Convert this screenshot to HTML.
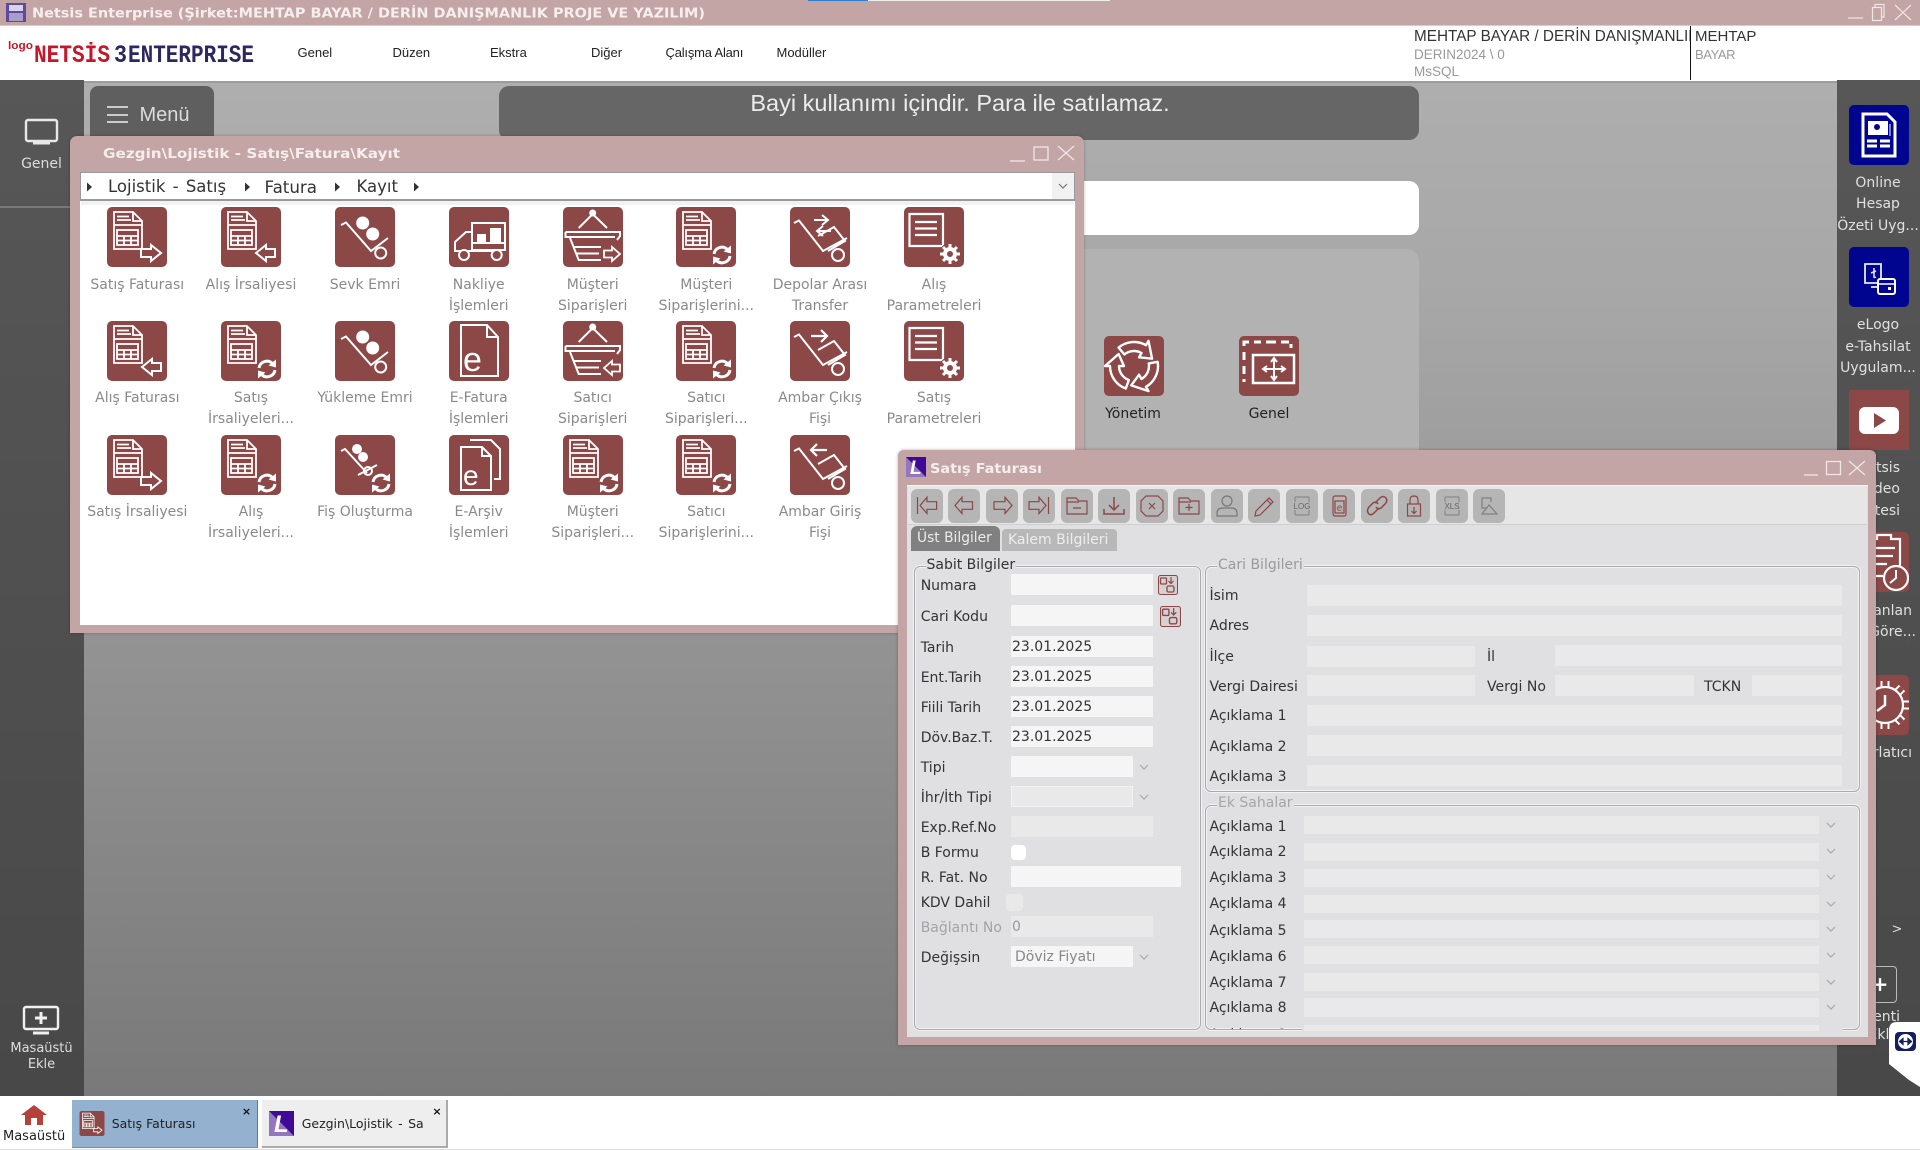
<!DOCTYPE html>
<html lang="tr"><head><meta charset="utf-8"><title>Netsis Enterprise</title>
<style>
*{box-sizing:border-box}
html,body{margin:0;padding:0;width:1920px;height:1150px;overflow:hidden;background:#8e8e8e}
body{position:relative;font-family:"DejaVu Sans",sans-serif;font-size:14px}
.a{position:absolute}
.t{position:absolute;white-space:nowrap;line-height:20px;height:20px;color:#333;font-size:14px;margin-top:1px}
.s{font-family:"Liberation Sans",sans-serif}
.c{text-align:center}
.cell{position:absolute;width:114px;text-align:center;color:#8a8a8a;font-size:14px;line-height:21px;white-space:nowrap}
.cell svg{display:block;margin:0 auto 7.4px;width:60px;height:60px}
.f{position:absolute;background:#f5f5f5}
.d{position:absolute;background:#e9e9e9}
.btn{position:absolute;top:489px;width:32px;height:34px;background:#b5b5b5;border-radius:6px}
.btn svg{display:block;width:32px;height:34px;fill:none;stroke:#8c4747;stroke-width:1.2}
.g{position:absolute;border:1px solid #a9a9ad;border-radius:6px;box-shadow:0 0 0 1px #f2f2f2,inset 0 0 0 1px #f2f2f2}
.lg{position:absolute;background:#e0dfe2;line-height:16px;height:16px;padding:0 1px;white-space:nowrap;font-size:14px}
.ch{position:absolute;width:10px;height:6px;fill:none;stroke:#a8a8a8;stroke-width:1.2}
.side{color:#e0e0e0;width:84px;left:1836px;text-align:center}
.sr{color:#e0e0e0;text-align:right;width:84px}
</style></head><body>
<svg width="0" height="0" style="position:absolute">
<defs>
<g id="doc" fill="none" stroke="#fff" stroke-width="1.8"><path d="M7 5H26L35 14V42H7Z M26 5V14H35 M10 9.5H22 M10 13H24 M7 18H35"/><rect x="10" y="23" width="21" height="15"/><path d="M17 29V38M24 29V38M10 29H31M10 33.5H31"/></g>
<path id="arrR" d="M34 42H44V38L54 46L44 54V50H34Z" fill="#8c4747" stroke="#fff" stroke-width="2"/>
<path id="arrL" d="M54 42H45V38L35 46L45 54V50H54Z" fill="#8c4747" stroke="#fff" stroke-width="2"/>
<g id="ref"><circle cx="46" cy="48" r="11.5" fill="#8c4747"/><path d="M38 47A8 8 0 0 1 51.500 42.500M54 49A8 8 0 0 1 40.500 53.500" fill="none" stroke="#fff" stroke-width="3"/><path d="M55 38.500L55 46.500L47.500 44.500ZM37 57.500L37 49.500L44.500 51.500Z" fill="#fff"/></g>
<g id="trol" fill="none" stroke="#fff" stroke-width="2"><path d="M6 18L11 15.500L36 44L53 31"/><circle cx="45.700" cy="46" r="5.500"/></g>
<g id="box"><rect width="60" height="60" rx="5" fill="#8c4747"/></g>
<g id="trolb" fill="none" stroke="#fff" stroke-width="2"><path d="M4 16L9 13.500L33 44L57 31M28 29L44 20L55 34L38 44"/><circle cx="48" cy="48" r="6"/></g>
<g id="bask" fill="none" stroke="#fff" stroke-width="2"><circle cx="29.700" cy="6" r="2.500" fill="#fff"/><path d="M15.700 21L29.700 7L44 21M2.500 25H57V29L54 33M2.500 25V30H52M7 31L15.700 53H38M11 40H38M13 46.500H36"/></g>
<g id="par" fill="none" stroke="#fff"><path d="M5.500 7H39V39H5.500Z" stroke-width="2.200"/><path d="M11 15H33M11 21.500H33M11 28H33" stroke-width="2.200"/><circle cx="46" cy="47" r="11" fill="#8c4747" stroke="none"/><circle cx="46" cy="47" r="5" stroke-width="4"/><path d="M46 37V41M46 53V57M36 47H40M52 47H56M39 40L42 43M50 51L53 54M53 40L50 43M42 51L39 54" stroke-width="3"/></g>
<symbol id="i1" viewBox="0 0 60 60"><use href="#box"/><use href="#doc"/><use href="#arrR"/></symbol>
<symbol id="i2" viewBox="0 0 60 60"><use href="#box"/><use href="#doc"/><use href="#arrL"/></symbol>
<symbol id="i3" viewBox="0 0 60 60"><use href="#box"/><use href="#doc"/><use href="#ref"/></symbol>
<symbol id="i4" viewBox="0 0 60 60"><use href="#box"/><use href="#trol"/><circle cx="27.700" cy="16" r="6.500" fill="#fff"/><circle cx="37.700" cy="27" r="6.500" fill="#fff"/></symbol>
<symbol id="i5" viewBox="0 0 60 60"><use href="#box"/><g fill="none" stroke="#fff" stroke-width="2"><path d="M23 16H56V43H23ZM23 25H17L6 35V44H50M23 36H56"/><circle cx="15" cy="48" r="5" fill="#8c4747"/><circle cx="47.700" cy="48" r="5" fill="#8c4747"/></g><path d="M28 27H37V35H28ZM41 21H52V35H41Z" fill="#fff"/></symbol>
<symbol id="i6" viewBox="0 0 60 60"><use href="#box"/><use href="#bask"/><path d="M41 43.500H49V40L57 47L49 54V50.500H41Z" fill="#8c4747" stroke="#fff" stroke-width="1.800"/></symbol>
<symbol id="i7" viewBox="0 0 60 60"><use href="#box"/><use href="#bask"/><path d="M57 43.500H49V40L41 47L49 54V50.500H57Z" fill="#8c4747" stroke="#fff" stroke-width="1.800"/></symbol>
<symbol id="i8" viewBox="0 0 60 60"><use href="#box"/><use href="#trolb"/><path d="M24 13H37M32 8L38 13L32 18M41 24H28M33 19L27 24L33 29" fill="none" stroke="#fff" stroke-width="2"/></symbol>
<symbol id="i9" viewBox="0 0 60 60"><use href="#box"/><use href="#trolb"/><path d="M21 15H36M31 9L37 15L31 21" fill="none" stroke="#fff" stroke-width="2.200"/></symbol>
<symbol id="i10" viewBox="0 0 60 60"><use href="#box"/><use href="#trolb"/><path d="M37 15H22M27 9L21 15L27 21" fill="none" stroke="#fff" stroke-width="2.200"/></symbol>
<symbol id="i11" viewBox="0 0 60 60"><use href="#box"/><use href="#par"/></symbol>
<symbol id="i12" viewBox="0 0 60 60"><use href="#box"/><path d="M12 4H38L49 16V55H12Z M38 4V16H49" fill="none" stroke="#fff" stroke-width="2"/><text x="14" y="50" font-family="'Liberation Sans',sans-serif" font-size="34" fill="#fff">e</text></symbol>
<symbol id="i13" viewBox="0 0 60 60"><use href="#box"/><path d="M21 5H42L51 14V44H45M12 12H33L42 21V55H12Z M33 12V21H42" fill="none" stroke="#fff" stroke-width="2"/><text x="14" y="50" font-family="'Liberation Sans',sans-serif" font-size="28" fill="#fff">e</text></symbol>
<symbol id="i14" viewBox="0 0 60 60"><use href="#box"/><g fill="none" stroke="#fff" stroke-width="2"><path d="M6 16L10 14L32 38M23 40L42 30"/><circle cx="33" cy="36" r="4"/></g><circle cx="22" cy="14" r="5" fill="#fff"/><circle cx="28" cy="22" r="5" fill="#fff"/><use href="#ref"/></symbol>
<symbol id="chev" viewBox="0 0 10 6"><path d="M1 1L5 5L9 1"/></symbol>
<symbol id="iL" viewBox="0 0 25 25"><rect width="25" height="25" fill="#3f0a95"/><path d="M0 0L25 25H0Z" fill="#9575bd"/><text x="5" y="21" font-family="'Liberation Sans',sans-serif" font-size="24" font-weight="700" font-style="italic" fill="#fff">L</text></symbol>
<symbol id="add" viewBox="0 0 20 20"><rect x="0.500" y="0.500" width="19" height="19" rx="2" fill="#d5d0d2" stroke="#8c4747"/><rect x="2.500" y="3" width="6" height="6" rx="1" fill="none" stroke="#8c4747" stroke-width="1.300"/><rect x="9" y="11" width="7" height="6" rx="1.500" fill="none" stroke="#8c4747" stroke-width="1.300"/><path d="M13 2V8M10.500 6L13 8.500L15.500 6" fill="none" stroke="#8c4747" stroke-width="1.200"/></symbol>
<path id="rcy" d="M14.600 11.600A24 24 0 0 1 42 9.200L44.500 4.900L48.100 22.700L35 21.300L37.500 17A15 15 0 0 0 20.400 18.500Z" fill="none" stroke="#fff" stroke-width="2.400" stroke-linejoin="round"/>
</defs></svg>

<!-- background -->
<div class="a" style="left:0;top:80px;width:1920px;height:1016px;background:linear-gradient(180deg,#aeaeae 0,#a7a7a7 220px,#939393 560px,#797979 1016px)"></div>

<!-- title bar -->
<div class="a" style="left:0;top:0;width:1920px;height:26px;background:#c3a5a5;border-bottom:1px solid #d9cccc"></div>
<div class="a" style="left:808px;top:0;width:60px;height:1px;background:#2f7fd0"></div>
<div class="a" style="left:868px;top:0;width:242px;height:1px;background:#eee"></div>
<svg class="a" style="left:6px;top:3px" width="20" height="19" viewBox="0 0 20 19"><rect width="20" height="19" fill="#5b4aa0"/><rect x="3" y="2" width="14" height="6" fill="#d9d4e8"/><rect x="3" y="10" width="14" height="8" fill="#a99cc9"/></svg>
<svg class="a" style="left:32px;top:3px" width="680" height="20"><text x="0" y="14.500" textLength="673" lengthAdjust="spacingAndGlyphs" font-family="'DejaVu Sans',sans-serif" font-weight="700" font-size="13" fill="#f6eeee">Netsis Enterprise (Şirket:MEHTAP BAYAR / DERİN DANIŞMANLIK PROJE VE YAZILIM)</text></svg>
<svg class="a" style="left:1846px;top:2px" width="70" height="22" fill="none" stroke="#efe6e6" stroke-width="1.200"><path d="M2 16H17"/><rect x="26.500" y="5.500" width="9" height="13"/><path d="M29 5.500V2.500H38V15H35.500"/><path d="M49 3L65 18M65 3L49 18"/></svg>

<!-- menu bar -->
<div class="a" style="left:0;top:26px;width:1920px;height:55px;background:#fff"></div>
<div class="a" style="left:0;top:81px;width:1920px;height:2px;background:#9c9c9c"></div>
<svg class="a" style="left:8px;top:38px" width="250" height="28">
<text x="0" y="11" textLength="25" lengthAdjust="spacingAndGlyphs" font-family="'Liberation Sans',sans-serif" font-size="11" font-weight="700" fill="#c4182a">logo</text>
<text x="26" y="24" textLength="76" lengthAdjust="spacingAndGlyphs" font-family="'Liberation Mono',monospace" font-size="25" font-weight="700" fill="#c4182a">NETSİS</text>
<text x="106" y="24" textLength="13" lengthAdjust="spacingAndGlyphs" font-family="'Liberation Mono',monospace" font-size="25" font-weight="700" fill="#2c2760">3</text>
<text x="120" y="24" textLength="126" lengthAdjust="spacingAndGlyphs" font-family="'Liberation Mono',monospace" font-size="25" font-weight="700" fill="#2c2760">ENTERPRISE</text>
</svg>
<div class="t s" style="left:297.500px;top:42px;font-size:13px;color:#222">Genel</div>
<div class="t s" style="left:392.500px;top:42px;font-size:13px;color:#222">Düzen</div>
<div class="t s" style="left:490px;top:42px;font-size:13px;color:#222">Ekstra</div>
<div class="t s" style="left:591px;top:42px;font-size:13px;color:#222">Diğer</div>
<div class="t s" style="left:665.500px;top:42px;font-size:13px;letter-spacing:-.2px;color:#222">Çalışma Alanı</div>
<div class="t s" style="left:776.500px;top:42px;font-size:13px;color:#222">Modüller</div>
<div class="t s" style="left:1414px;top:26px;font-size:15.300px;color:#333;width:276px;overflow:hidden">MEHTAP BAYAR / DERİN DANIŞMANLIK PROJE</div>
<div class="t s" style="left:1414px;top:44px;font-size:13.500px;color:#999">DERIN2024 \ 0</div>
<div class="t s" style="left:1414px;top:61px;font-size:13.500px;color:#999">MsSQL</div>
<div class="a" style="left:1690px;top:26px;width:1.200px;height:54px;background:#111"></div>
<div class="t s" style="left:1695px;top:26px;font-size:15px;color:#333">MEHTAP</div>
<div class="t s" style="left:1695px;top:44px;font-size:13px;letter-spacing:-.4px;color:#999">BAYAR</div>

<!-- left sidebar -->
<div class="a" style="left:0;top:80px;width:84px;height:1016px;background:linear-gradient(180deg,#575757,#484848)"></div>
<div class="a" style="left:0;top:206px;width:84px;height:2px;background:#7a7a7a"></div>
<svg class="a" style="left:24px;top:118px" width="35" height="29" fill="none" stroke="#e8e8e8" stroke-width="2.400"><rect x="2" y="2" width="31" height="21" rx="2" fill="#555"/><path d="M9 25H26" stroke-width="3"/></svg>
<div class="t c" style="left:0;width:83px;top:153px;color:#dcdcdc">Genel</div>
<svg class="a" style="left:22px;top:1005px" width="38" height="31" fill="none" stroke="#f0f0f0" stroke-width="2.400"><rect x="2" y="2" width="34" height="22" rx="2"/><path d="M19 7V19M13 13H25" stroke-width="3"/><path d="M11 28H27" stroke-width="3"/></svg>
<div class="t c" style="left:0;width:83px;top:1038px;font-size:13px;color:#dedede">Masaüstü</div>
<div class="t c" style="left:0;width:83px;top:1054px;font-size:13px;color:#dedede">Ekle</div>

<!-- menu button + banner + panels -->
<div class="a" style="left:90px;top:86px;width:124px;height:60px;background:#5f5f5f;border-radius:8px"></div>
<div class="a" style="left:107px;top:106px;width:21px;height:2px;background:#ccc"></div>
<div class="a" style="left:107px;top:113.500px;width:21px;height:2px;background:#ccc"></div>
<div class="a" style="left:107px;top:121px;width:21px;height:2px;background:#ccc"></div>
<div class="t s" style="left:139.500px;top:104px;font-size:20px;color:#dcdcdc">Menü</div>
<div class="a" style="left:499px;top:86px;width:920px;height:54px;background:#666;border-radius:10px"></div>
<div class="t s c" style="left:500px;width:920px;top:92px;font-size:23.500px;color:#ececec">Bayi kullanımı içindir. Para ile satılamaz.</div>
<div class="a" style="left:499px;top:181px;width:920px;height:54px;background:#fff;border-radius:10px"></div>
<div class="a" style="left:499px;top:249px;width:920px;height:370px;background:#b2b2b2;border-radius:12px"></div>
<svg class="a" style="left:1103.500px;top:336px" width="60" height="60" viewBox="0 0 60 60"><rect width="60" height="60" rx="5" fill="#8c4747"/><use href="#rcy"/><use href="#rcy" transform="rotate(120 30 30)"/><use href="#rcy" transform="rotate(240 30 30)"/></svg>
<svg class="a" style="left:1238.700px;top:336px" width="60" height="60" viewBox="0 0 60 60"><rect width="60" height="60" rx="5" fill="#8c4747"/><path d="M5 10V6H10M15 6H22M27 6H37M42 6H50M52 8V12M5 16V24M5 30V38M5 43V46" fill="none" stroke="#fff" stroke-width="3"/><rect x="14" y="19" width="41" height="28" fill="none" stroke="#fff" stroke-width="2.500"/><path d="M35 23V43M25 33H45M32 26L35 22L38 26M32 40L35 44L38 40M28 30L24 33L28 36M42 30L46 33L42 36" fill="none" stroke="#fff" stroke-width="2"/></svg>
<div class="t c" style="left:1073px;width:120px;top:403px;color:#222">Yönetim</div>
<div class="t c" style="left:1209px;width:120px;top:403px;color:#222">Genel</div>

<!-- right sidebar -->
<div class="a" style="left:1837px;top:80px;width:83px;height:1016px;background:linear-gradient(180deg,#575757,#484848)"></div>
<svg class="a" style="left:1849px;top:105px" width="60" height="60" viewBox="0 0 60 60"><rect width="60" height="60" rx="5" fill="#00058f"/><path d="M14 9H38L46 17V51H14Z" fill="none" stroke="#fff" stroke-width="3"/><rect x="19" y="16" width="20" height="14" fill="#fff"/><circle cx="28" cy="22" r="3" fill="#00058f"/><path d="M41 19V31" stroke="#fff"/><path d="M18 36H28M31 36H41M18 41H28M31 41H41" stroke="#fff" stroke-width="3"/></svg>
<div class="t side" style="top:171.500px">Online</div>
<div class="t side" style="top:193px">Hesap</div>
<div class="t side" style="top:214.500px">Özeti Uyg...</div>
<svg class="a" style="left:1849px;top:247px" width="60" height="60" viewBox="0 0 60 60"><rect width="60" height="60" rx="5" fill="#00058f"/><path d="M32 33V17H16V36H28" fill="none" stroke="#e8e8ff" stroke-width="1.800"/><path d="M22 40H28" stroke="#e8e8ff" stroke-width="1.800"/><path d="M25 21V30Q25 31 27 30M22 26L27 24" fill="none" stroke="#e8e8ff" stroke-width="1.500"/><rect x="29" y="32" width="17" height="15" rx="2" fill="#00058f" stroke="#fff" stroke-width="2"/><path d="M29 37H46" stroke="#fff" stroke-width="1.500"/><rect x="39" y="40" width="3" height="3" fill="#fff"/></svg>
<div class="t side" style="top:314px">eLogo</div>
<div class="t side" style="top:335.500px">e-Tahsilat</div>
<div class="t side" style="top:357px">Uygulam...</div>
<svg class="a" style="left:1849px;top:390px" width="60" height="60" viewBox="0 0 60 60"><rect width="60" height="60" fill="#8c4747"/><rect x="10" y="17" width="40" height="27" rx="6" fill="#fff"/><path d="M25 23L37 30.500L25 38Z" fill="#8c4747"/></svg>
<div class="t sr" style="left:1816px;top:456.500px">Netsis</div>
<div class="t sr" style="left:1816px;top:478px">Video</div>
<div class="t sr" style="left:1816px;top:499.500px">Sitesi</div>
<svg class="a" style="left:1849px;top:532px" width="60" height="60" viewBox="0 0 60 60"><rect width="60" height="60" rx="5" fill="#8c4747"/><path d="M20 7H28V3H42V7H51V34M22 44H34M26 16H46M26 24H44M26 32H38" fill="none" stroke="#fff" stroke-width="2.200"/><circle cx="47" cy="46" r="12" fill="#8c4747" stroke="#fff" stroke-width="2.200"/><path d="M47 38V46L41 51" fill="none" stroke="#fff" stroke-width="2"/></svg>
<div class="t sr" style="left:1828px;top:599.500px">Planlan</div>
<div class="t sr" style="left:1832px;top:621px">Göre...</div>
<svg class="a" style="left:1849px;top:675px" width="60" height="60" viewBox="0 0 60 60"><rect width="60" height="60" rx="5" fill="#8c4747"/><path d="M36 6V54M12 30H60M19 13L53 47M53 13L19 47" stroke="#fff" stroke-width="9"/><path d="M36 6V54M12 30H60M19 13L53 47M53 13L19 47" stroke="#8c4747" stroke-width="5"/><circle cx="36" cy="30" r="18" fill="#8c4747" stroke="#fff" stroke-width="2.200"/><path d="M36 20V30L28 36" fill="none" stroke="#fff" stroke-width="2.500"/></svg>
<div class="t sr" style="left:1828px;top:742px">Hatırlatıcı</div>
<div class="t c" style="left:1887px;width:20px;top:919px;color:#ddd;font-size:13px">&gt;</div>
<div class="a" style="left:1860px;top:966px;width:37px;height:37px;border:1.500px solid #bbb;border-radius:4px"></div>
<div class="t c" style="left:1870px;width:20px;top:973px;color:#fff;font-size:20px;font-weight:700">+</div>
<div class="t sr" style="left:1816px;top:1006px">Eklenti</div>
<div class="t sr" style="left:1814px;top:1024px">Ekle</div>
<svg class="a" style="left:1889px;top:1022px" width="31" height="65" viewBox="0 0 31 65"><path d="M8 0H31V65L20 58L0 42V8Q0 0 8 0Z" fill="#fff"/><rect x="6" y="10" width="21" height="19" rx="4" fill="#14205e"/><circle cx="16.500" cy="19.500" r="7.500" fill="#fff"/><path d="M10 19.500H23M14 16.500L10.500 19.500L14 22.500ZM19 16.500L22.500 19.500L19 22.500Z" fill="#14205e" stroke="#14205e" stroke-width="1.200"/></svg>

<!-- Window 1 -->
<div class="a" style="left:70px;top:136px;width:1014px;height:497px;background:#c3a5a5;border-radius:7px 7px 0 0;box-shadow:0 0 3px rgba(0,0,0,.25)"></div>
<svg class="a" style="left:103px;top:143px" width="310" height="20"><text x="0" y="15" textLength="297" lengthAdjust="spacingAndGlyphs" font-family="'DejaVu Sans',sans-serif" font-weight="700" font-size="13" fill="#f6eeee">Gezgin\Lojistik - Satış\Fatura\Kayıt</text></svg>
<svg class="a" style="left:1008px;top:144px" width="70" height="20" fill="none" stroke="#efe6e6" stroke-width="1.300"><path d="M2 17H17"/><rect x="26" y="3" width="14" height="13"/><path d="M50 2L66 16M66 2L50 16"/></svg>
<div class="a" style="left:80px;top:172px;width:995px;height:453px;background:#fff"></div>
<div class="a" style="left:80px;top:172px;width:995px;height:29px;background:#fff;border:1px solid #9a9a9a;border-width:1px 1px 2px 1px"></div>
<div class="a" style="left:1052px;top:173px;width:22px;height:26px;background:#f1f1f1"></div>
<svg class="ch" style="left:1058px;top:183px" viewBox="0 0 10 6"><path d="M1 1L5 5L9 1" stroke="#777"/></svg>
<div class="a" style="left:81px;top:201px;width:993px;height:4px;background:#f2f2f2"></div>
<svg class="a" style="left:86px;top:181px" width="340" height="12" fill="#333"><path d="M1 1.500L6 6L1 10.500Z"/><path d="M159 1.500L164 6L159 10.500Z"/><path d="M249 1.500L254 6L249 10.500Z"/><path d="M328 1.500L333 6L328 10.500Z"/></svg>
<div class="t" style="left:108px;top:175.500px;font-size:16.500px;color:#333;word-spacing:2px">Lojistik - Satış</div>
<div class="t" style="left:264.500px;top:175.500px;font-size:16.700px;color:#333">Fatura</div>
<div class="t" style="left:356.500px;top:175.500px;font-size:16.500px;color:#333">Kayıt</div>

<div class="cell" style="left:80.300px;top:207.300px"><svg><use href="#i1"/></svg>Satış Faturası</div>
<div class="cell" style="left:194px;top:207.300px"><svg><use href="#i2"/></svg>Alış İrsaliyesi</div>
<div class="cell" style="left:308px;top:207.300px"><svg><use href="#i4"/></svg>Sevk Emri</div>
<div class="cell" style="left:421.700px;top:207.300px"><svg><use href="#i5"/></svg>Nakliye<br>İşlemleri</div>
<div class="cell" style="left:535.700px;top:207.300px"><svg><use href="#i6"/></svg>Müşteri<br>Siparişleri</div>
<div class="cell" style="left:649.300px;top:207.300px"><svg><use href="#i3"/></svg>Müşteri<br>Siparişlerini...</div>
<div class="cell" style="left:763px;top:207.300px"><svg><use href="#i8"/></svg>Depolar Arası<br>Transfer</div>
<div class="cell" style="left:877px;top:207.300px"><svg><use href="#i11"/></svg>Alış<br>Parametreleri</div>

<div class="cell" style="left:80.300px;top:321px"><svg><use href="#i2"/></svg>Alış Faturası</div>
<div class="cell" style="left:194px;top:321px"><svg><use href="#i3"/></svg>Satış<br>İrsaliyeleri...</div>
<div class="cell" style="left:308px;top:321px"><svg><use href="#i4"/></svg>Yükleme Emri</div>
<div class="cell" style="left:421.700px;top:321px"><svg><use href="#i12"/></svg>E-Fatura<br>İşlemleri</div>
<div class="cell" style="left:535.700px;top:321px"><svg><use href="#i7"/></svg>Satıcı<br>Siparişleri</div>
<div class="cell" style="left:649.300px;top:321px"><svg><use href="#i3"/></svg>Satıcı<br>Siparişleri...</div>
<div class="cell" style="left:763px;top:321px"><svg><use href="#i9"/></svg>Ambar Çıkış<br>Fişi</div>
<div class="cell" style="left:877px;top:321px"><svg><use href="#i11"/></svg>Satış<br>Parametreleri</div>

<div class="cell" style="left:80.300px;top:435px"><svg><use href="#i1"/></svg>Satış İrsaliyesi</div>
<div class="cell" style="left:194px;top:435px"><svg><use href="#i3"/></svg>Alış<br>İrsaliyeleri...</div>
<div class="cell" style="left:308px;top:435px"><svg><use href="#i14"/></svg>Fiş Oluşturma</div>
<div class="cell" style="left:421.700px;top:435px"><svg><use href="#i13"/></svg>E-Arşiv<br>İşlemleri</div>
<div class="cell" style="left:535.700px;top:435px"><svg><use href="#i3"/></svg>Müşteri<br>Siparişleri...</div>
<div class="cell" style="left:649.300px;top:435px"><svg><use href="#i3"/></svg>Satıcı<br>Siparişlerini...</div>
<div class="cell" style="left:763px;top:435px"><svg><use href="#i10"/></svg>Ambar Giriş<br>Fişi</div>

<!-- Window 2 -->
<div class="a" style="left:898px;top:450px;width:978px;height:595px;background:#c3a5a5;border-radius:6px 6px 0 0;box-shadow:0 0 3px rgba(0,0,0,.3)"></div>
<svg class="a" style="left:906px;top:457px" width="20" height="20"><use href="#iL" width="20" height="20"/></svg>
<svg class="a" style="left:930px;top:457.500px" width="120" height="20"><text x="0" y="15" textLength="112" lengthAdjust="spacingAndGlyphs" font-family="'DejaVu Sans',sans-serif" font-weight="700" font-size="13" fill="#f6eeee">Satış Faturası</text></svg>
<svg class="a" style="left:1802px;top:459px" width="66" height="20" fill="none" stroke="#efe6e6" stroke-width="1.300"><path d="M2 16H16"/><rect x="24.500" y="2.500" width="14" height="13"/><path d="M47 2L63 16M63 2L47 16"/></svg>
<div class="a" style="left:907px;top:485px;width:961px;height:552px;background:#e0dfe2;border-top:1px solid #f7f7f7"></div>
<div class="a" style="left:908px;top:486px;width:959px;height:39px;background:#e6e6e6;border-bottom:1px solid #cfcfcf"></div>

<!-- toolbar -->
<div class="btn" style="left:910.700px"><svg viewBox="0 0 32 34"><path d="M6.500 8V25M9 16.500L16 8.300V12.700H25.600V20.300H16V24.500Z"/></svg></div>
<div class="btn" style="left:948.200px"><svg viewBox="0 0 32 34"><path d="M7 16.500L14 8.300V12.700H24.500V20.300H14V24.500Z"/></svg></div>
<div class="btn" style="left:985.700px"><svg viewBox="0 0 32 34"><path d="M8 12.700H19V8.300L26 16.500L19 24.500V20.300H8Z"/></svg></div>
<div class="btn" style="left:1023.200px"><svg viewBox="0 0 32 34"><path d="M6 12.700H16V8.300L23 16.500L16 24.500V20.300H6ZM25.500 8V25"/></svg></div>
<div class="btn" style="left:1060.700px"><svg viewBox="0 0 32 34"><path d="M6 9H15L18 12H26V25H6ZM6 13H18M12 19H20"/></svg></div>
<div class="btn" style="left:1098.200px"><svg viewBox="0 0 32 34" style="stroke-width:1.500"><path d="M6 20V25H26V20M16 8V21M11 16L16 21L21 16"/></svg></div>
<div class="btn" style="left:1135.700px"><svg viewBox="0 0 32 34"><path d="M10 7H22L27 12V22L22 27H10L5 22V12ZM13 14L19 20M19 14L13 20"/></svg></div>
<div class="btn" style="left:1173.200px"><svg viewBox="0 0 32 34"><path d="M6 9H15L18 12H26V25H6ZM6 13H18M16 15V22M12.500 18.500H19.500"/></svg></div>
<div class="btn" style="left:1210.700px"><svg viewBox="0 0 32 34" style="stroke:#777"><circle cx="16" cy="12" r="5"/><path d="M6 27V24Q6 19 12 19H20Q26 19 26 24V27Z"/></svg></div>
<div class="btn" style="left:1248.200px"><svg viewBox="0 0 32 34"><path d="M8 22L21 9L25 13L12 26L7 27ZM19 11L23 15"/></svg></div>
<div class="btn" style="left:1285.700px"><svg viewBox="0 0 32 34" style="stroke:#8a8a8a"><path d="M9 13V9Q9 8 10 8H22Q23 8 23 9V13M9 21V25Q9 26 10 26H22Q23 26 23 25V21"/><text x="16" y="20" text-anchor="middle" font-family="'Liberation Sans',sans-serif" font-size="8" fill="#666" stroke="none">LOG</text></svg></div>
<div class="btn" style="left:1323.200px"><svg viewBox="0 0 32 34"><rect x="10" y="7" width="13" height="20" rx="2"/><rect x="12" y="12" width="9" height="12"/><text x="16.500" y="22" text-anchor="middle" font-family="'Liberation Sans',sans-serif" font-size="10" fill="#8c4747" stroke="none">e</text></svg></div>
<div class="btn" style="left:1360.700px"><svg viewBox="0 0 32 34" style="stroke-width:1.500"><path d="M14 14L19 9Q22 6 25 9Q27 12 24 15L20 19Q17 21 15 18M18 19L13 24Q10 27 8 25Q5 22 8 18L12 14Q15 12 17 15"/></svg></div>
<div class="btn" style="left:1398.200px"><svg viewBox="0 0 32 34"><rect x="9.500" y="15" width="13" height="12"/><path d="M12 15V11Q12 7 16 7Q20 7 20 11V15M16 18V24M13.500 22L16 24.500L18.500 22"/></svg></div>
<div class="btn" style="left:1435.700px"><svg viewBox="0 0 32 34" style="stroke:#8a8a8a"><path d="M9 13V9Q9 8 10 8H22Q23 8 23 9V13M9 21V25Q9 26 10 26H22Q23 26 23 25V21"/><text x="16" y="20" text-anchor="middle" font-family="'Liberation Sans',sans-serif" font-size="8" fill="#666" stroke="none">XLS</text></svg></div>
<div class="btn" style="left:1473.200px"><svg viewBox="0 0 32 34" style="stroke:#808080"><path d="M14 19H9V9H18V13M16 16L24 25H9Z"/></svg></div>

<!-- tabs -->
<div class="a" style="left:910.700px;top:526px;width:89px;height:25px;background:#808080;border-radius:6px 6px 0 0"></div>
<div class="t" style="left:917px;top:527px;color:#ececec;font-size:13.800px">Üst Bilgiler</div>
<div class="a" style="left:1002px;top:529px;width:114.500px;height:22px;background:#b8b8b8;border-radius:4px 4px 0 0"></div>
<div class="t" style="left:1008px;top:528.500px;color:#ededed;font-size:14px">Kalem Bilgileri</div>

<!-- Sabit Bilgiler -->
<div class="g" style="left:914px;top:566px;width:287px;height:464px"></div>
<div class="lg" style="left:925.500px;top:557px;color:#333">Sabit Bilgiler</div>
<div class="t" style="left:920.700px;top:575px">Numara</div><div class="f" style="left:1010.700px;top:574px;width:142.300px;height:21px"></div>
<svg class="a" style="left:1158px;top:575px" width="20" height="20"><use href="#add" width="20" height="20"/></svg>
<div class="t" style="left:920.700px;top:606px">Cari Kodu</div><div class="f" style="left:1010.700px;top:605px;width:142.300px;height:21px"></div>
<svg class="a" style="left:1159.500px;top:606px" width="21" height="21"><use href="#add" width="21" height="21"/></svg>
<div class="t" style="left:920.700px;top:637px">Tarih</div><div class="f" style="left:1010.700px;top:636px;width:142.300px;height:21px"></div><div class="t" style="left:1012px;top:636px">23.01.2025</div>
<div class="t" style="left:920.700px;top:667px">Ent.Tarih</div><div class="f" style="left:1010.700px;top:666px;width:142.300px;height:21px"></div><div class="t" style="left:1012px;top:666px">23.01.2025</div>
<div class="t" style="left:920.700px;top:697px">Fiili Tarih</div><div class="f" style="left:1010.700px;top:696px;width:142.300px;height:21px"></div><div class="t" style="left:1012px;top:696px">23.01.2025</div>
<div class="t" style="left:920.700px;top:727px">Döv.Baz.T.</div><div class="f" style="left:1010.700px;top:726px;width:142.300px;height:21px"></div><div class="t" style="left:1012px;top:726px">23.01.2025</div>
<div class="t" style="left:920.700px;top:757px">Tipi</div><div class="f" style="left:1010.700px;top:756px;width:122px;height:21px"></div>
<svg class="ch" style="left:1139px;top:764px"><use href="#chev"/></svg>
<div class="t" style="left:920.700px;top:787px">İhr/İth Tipi</div><div class="d" style="left:1010.700px;top:786px;width:122px;height:21px;border:1px solid #f2f2f2"></div>
<svg class="ch" style="left:1139px;top:794px"><use href="#chev"/></svg>
<div class="t" style="left:920.700px;top:817px">Exp.Ref.No</div><div class="d" style="left:1010.700px;top:816px;width:142.300px;height:21px"></div>
<div class="t" style="left:920.700px;top:842px">B Formu</div><div class="a" style="left:1010.700px;top:845px;width:15px;height:15px;background:#fff;border-radius:4px"></div>
<div class="t" style="left:920.700px;top:867px">R. Fat. No</div><div class="f" style="left:1010.700px;top:866px;width:170px;height:21px"></div>
<div class="t" style="left:920.700px;top:892px">KDV Dahil</div><div class="d" style="left:1006px;top:894px;width:17px;height:17px;border-radius:4px"></div>
<div class="t" style="left:920.700px;top:917px;color:#a4a4a4">Bağlantı No</div><div class="d" style="left:1010.700px;top:916px;width:142.300px;height:21px"></div><div class="t" style="left:1012px;top:916px;color:#999">0</div>
<div class="t" style="left:920.700px;top:947px">Değişsin</div><div class="f" style="left:1010.700px;top:946px;width:122px;height:21px"></div><div class="t" style="left:1015px;top:946px;color:#888">Döviz Fiyatı</div>
<svg class="ch" style="left:1139px;top:954px"><use href="#chev"/></svg>

<!-- Cari Bilgileri -->
<div class="g" style="left:1205px;top:566px;width:655px;height:226px"></div>
<div class="lg" style="left:1217px;top:557px;color:#9a9a9a">Cari Bilgileri</div>
<div class="t" style="left:1209.500px;top:585px">İsim</div><div class="d" style="left:1307px;top:585px;width:535px;height:21px"></div>
<div class="t" style="left:1209.500px;top:615px">Adres</div><div class="d" style="left:1307px;top:615px;width:535px;height:21px"></div>
<div class="t" style="left:1209.500px;top:646px">İlçe</div><div class="d" style="left:1307px;top:646px;width:167.500px;height:21px"></div>
<div class="t" style="left:1487px;top:646px">İl</div><div class="d" style="left:1554.700px;top:645px;width:287.300px;height:21px"></div>
<div class="t" style="left:1209.500px;top:676px">Vergi Dairesi</div><div class="d" style="left:1307px;top:675px;width:167.500px;height:21px"></div>
<div class="t" style="left:1487px;top:676px">Vergi No</div><div class="d" style="left:1554.700px;top:675px;width:139.300px;height:21px"></div>
<div class="t" style="left:1704px;top:676px">TCKN</div><div class="d" style="left:1752px;top:675px;width:90px;height:21px"></div>
<div class="t" style="left:1209.500px;top:705px">Açıklama 1</div><div class="d" style="left:1307px;top:705px;width:535px;height:21px"></div>
<div class="t" style="left:1209.500px;top:736px">Açıklama 2</div><div class="d" style="left:1307px;top:735px;width:535px;height:21px"></div>
<div class="t" style="left:1209.500px;top:766px">Açıklama 3</div><div class="d" style="left:1307px;top:765px;width:535px;height:21px"></div>

<!-- Ek Sahalar -->
<div class="g" style="left:1205px;top:805px;width:655px;height:225px"></div>
<div class="lg" style="left:1217px;top:795px;color:#a6a6a6">Ek Sahalar</div>
<div class="t" style="left:1209.500px;top:816px">Açıklama 1</div><div class="d" style="left:1304px;top:816px;width:515px;height:18.300px"></div><svg class="ch" style="left:1826px;top:822px"><use href="#chev"/></svg>
<div class="t" style="left:1209.500px;top:841px">Açıklama 2</div><div class="d" style="left:1304px;top:842.700px;width:515px;height:18.300px"></div><svg class="ch" style="left:1826px;top:848px"><use href="#chev"/></svg>
<div class="t" style="left:1209.500px;top:867px">Açıklama 3</div><div class="d" style="left:1304px;top:868.700px;width:515px;height:18.300px"></div><svg class="ch" style="left:1826px;top:874px"><use href="#chev"/></svg>
<div class="t" style="left:1209.500px;top:893px">Açıklama 4</div><div class="d" style="left:1304px;top:895px;width:515px;height:18.300px"></div><svg class="ch" style="left:1826px;top:901px"><use href="#chev"/></svg>
<div class="t" style="left:1209.500px;top:920px">Açıklama 5</div><div class="d" style="left:1304px;top:920px;width:515px;height:18.300px"></div><svg class="ch" style="left:1826px;top:926px"><use href="#chev"/></svg>
<div class="t" style="left:1209.500px;top:946px">Açıklama 6</div><div class="d" style="left:1304px;top:946px;width:515px;height:18.300px"></div><svg class="ch" style="left:1826px;top:952px"><use href="#chev"/></svg>
<div class="t" style="left:1209.500px;top:972px">Açıklama 7</div><div class="d" style="left:1304px;top:973.300px;width:515px;height:18px"></div><svg class="ch" style="left:1826px;top:979px"><use href="#chev"/></svg>
<div class="t" style="left:1209.500px;top:997px">Açıklama 8</div><div class="d" style="left:1304px;top:998.300px;width:515px;height:18.300px"></div><svg class="ch" style="left:1826px;top:1004px"><use href="#chev"/></svg>
<div class="a" style="left:1207px;top:1022px;width:90px;height:7px;overflow:hidden"><div class="t" style="left:2.500px;top:2px">Açıklama 9</div></div>
<div class="a" style="left:1302px;top:1026px;width:541px;height:6px;background:#e0dfe2"></div>
<div class="d" style="left:1304px;top:1025px;width:515px;height:6px"></div>

<!-- Taskbar -->
<div class="a" style="left:0;top:1096px;width:1920px;height:54px;background:#fff;border-bottom:1px solid #ddd"></div>
<svg class="a" style="left:21px;top:1105px" width="26" height="20" viewBox="0 0 26 20"><path d="M13 0L26 10H22V20H16V13H10V20H4V10H0Z" fill="#b5423a"/></svg>
<div class="t" style="left:3px;top:1126px;font-size:13px;color:#222">Masaüstü</div>
<div class="a" style="left:72px;top:1100px;width:186px;height:48px;background:#95b1d0;border-right:1px solid #777;border-bottom:1px solid #888"></div>
<svg class="a" style="left:78.500px;top:1111px" width="26" height="25" viewBox="0 0 60 60"><use href="#i1" width="60" height="60"/></svg>
<div class="t" style="left:111.700px;top:1113px;font-size:12.500px;color:#222">Satış Faturası</div>
<div class="t c" style="left:239.500px;width:14px;top:1101px;font-size:11px;font-weight:700;color:#111">×</div>
<div class="a" style="left:261.700px;top:1100px;width:186.300px;height:48px;background:#eee;border-right:2px solid #aaa;border-bottom:2px solid #aaa"></div>
<svg class="a" style="left:269px;top:1111px" width="25" height="25"><use href="#iL" width="25" height="25"/></svg>
<div class="t" style="left:301.700px;top:1113px;font-size:12.500px;word-spacing:1.500px;color:#222">Gezgin\Lojistik - Sa</div>
<div class="t c" style="left:430px;width:14px;top:1101px;font-size:11px;font-weight:700;color:#111">×</div>
</body></html>
